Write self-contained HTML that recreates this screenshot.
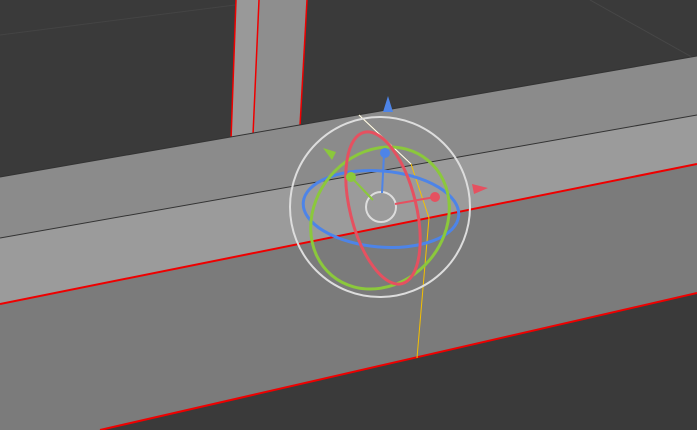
<!DOCTYPE html><html><head><style>body{margin:0;background:#3a3a3a;overflow:hidden}svg{display:block}</style></head><body>
<svg width="697" height="430" viewBox="0 0 697 430" xmlns="http://www.w3.org/2000/svg">
<rect width="697" height="430" fill="#3a3a3a"/>
<line x1="0" y1="35" x2="235" y2="5" stroke="#444" stroke-width="1"/>
<line x1="590" y1="0" x2="697" y2="60" stroke="#474747" stroke-width="1"/>
<polygon points="236,0 307,0 300,136 231,148" fill="#8e8e8e"/>
<polygon points="236,0 259,0 253,140 231,148" fill="#999"/>
<line x1="236" y1="0" x2="231" y2="140" stroke="#e00" stroke-width="1.5"/>
<line x1="259" y1="0" x2="253" y2="135" stroke="#e00" stroke-width="1.5"/>
<line x1="307" y1="0" x2="300" y2="126" stroke="#e00" stroke-width="1.5"/>
<polygon points="0,177 697,56 697,115 0,238" fill="#8b8b8b"/>
<polygon points="0,238 697,115 697,164 0,304" fill="#9b9b9b"/>
<polygon points="0,304 697,164 697,293 100,430 0,430" fill="#7b7b7b"/>
<line x1="0" y1="177" x2="697" y2="56" stroke="#333" stroke-width="1"/>
<line x1="0" y1="238" x2="697" y2="115" stroke="#333" stroke-width="1"/>
<line x1="0" y1="304" x2="697" y2="164" stroke="#e00" stroke-width="2"/>
<line x1="100" y1="430" x2="697" y2="293" stroke="#e00" stroke-width="2"/>
<polyline points="359,115 411,164 429,218 417,358" fill="none" stroke="#f5c000" stroke-width="1"/>
<line x1="359" y1="115" x2="411" y2="164" stroke="#fff" stroke-width="1"/>
<circle cx="380" cy="207" r="90" fill="none" stroke="#ddd" stroke-width="2"/>
<ellipse cx="381" cy="209" rx="78" ry="38" transform="rotate(5 381 209)" fill="none" stroke="#4d84e8" stroke-width="3"/>
<ellipse cx="380" cy="218" rx="65" ry="75" transform="rotate(40 380 218)" fill="none" stroke="#8bc83c" stroke-width="3"/>
<ellipse cx="383" cy="208" rx="33" ry="78" transform="rotate(-14 383 208)" fill="none" stroke="#e55160" stroke-width="3"/>
<circle cx="381" cy="207" r="15" fill="none" stroke="#ddd" stroke-width="2"/>
<line x1="382" y1="193" x2="384" y2="154" stroke="#4d84e8" stroke-width="2"/>
<circle cx="385" cy="153" r="5" fill="#4d84e8"/>
<polygon points="388,96 383,112 393,112" fill="#4d84e8"/>
<line x1="373" y1="200" x2="351" y2="177" stroke="#8bc83c" stroke-width="2"/>
<circle cx="351" cy="177" r="5" fill="#8bc83c"/>
<polygon points="323,148 332,160 336,152" fill="#8bc83c"/>
<line x1="395" y1="204" x2="435" y2="197" stroke="#e55160" stroke-width="2"/>
<circle cx="435" cy="197" r="5" fill="#e55160"/>
<polygon points="488,188 472,184 474,194" fill="#e55160"/>
</svg></body></html>
